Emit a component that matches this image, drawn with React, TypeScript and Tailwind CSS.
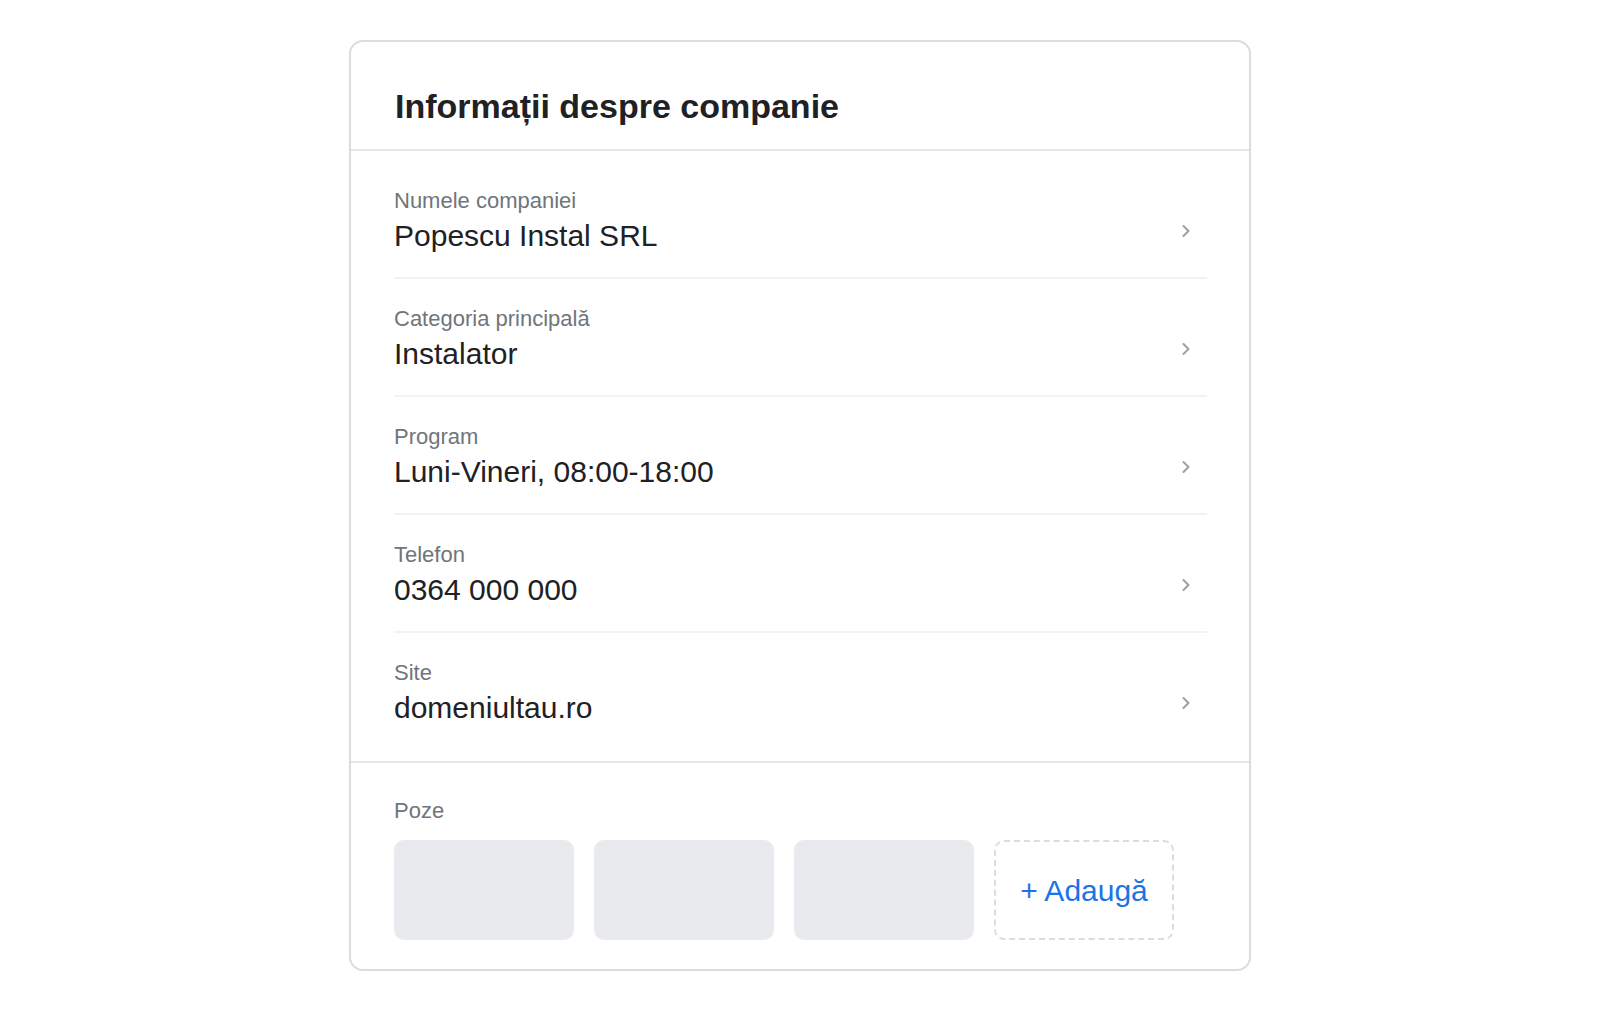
const FONT = { fontFamily: '"Liberation Sans", Arial, sans-serif' }

interface Field {
  label: string
  value: string
}

const FIELDS: Field[] = [
  { label: 'Numele companiei', value: 'Popescu Instal SRL' },
  { label: 'Categoria principală', value: 'Instalator' },
  { label: 'Program', value: 'Luni-Vineri, 08:00-18:00' },
  { label: 'Telefon', value: '0364 000 000' },
  { label: 'Site', value: 'domeniultau.ro' },
]

function Chevron() {
  return (
    <svg width="8" height="12" viewBox="0 0 8 12" fill="none" className="block">
      <path d="M1.5 1 L6.5 6 L1.5 11" stroke="#9aa0a6" strokeWidth="2" strokeLinecap="round" strokeLinejoin="round" />
    </svg>
  )
}

function FieldRow({ field, last }: { field: Field; last: boolean }) {
  return (
    <div className={`flex items-start justify-between pt-[26px] pb-[22px] ${last ? '' : 'border-b-2 border-[#f1f3f4]'}`}>
      <div>
        <div className="text-[22px] leading-[28px] text-[#70757a]">{field.label}</div>
        <div className="mt-[2px] text-[30px] leading-[38px] text-[#202124]">{field.value}</div>
      </div>
      <div className="mt-[38px] mr-[17px]">
        <Chevron />
      </div>
    </div>
  )
}

export default function App() {
  return (
    <div className="min-h-screen bg-white pt-[40px]" style={FONT}>
      <div className="mx-auto w-[902px] rounded-[14px] border-2 border-[#dadce0] bg-white">
        <div className="pl-[44px] pr-[42px] pt-[44px] pb-[23px] border-b-2 border-[#e6e7ea]">
          <h2 className="text-[34px] leading-[40px] font-bold text-[#202124]">Informații despre companie</h2>
        </div>

        <div className="pl-[43px] pr-[42px] pt-[10px] pb-[12px] border-b-2 border-[#e6e7ea]">
          {FIELDS.map((f, i) => (
            <FieldRow key={f.label} field={f} last={i === FIELDS.length - 1} />
          ))}
        </div>

        <div className="pl-[43px] pr-[42px] pt-[34px] pb-[29px]">
          <div className="text-[22px] leading-[28px] text-[#70757a] mb-[15px]">Poze</div>
          <div className="flex gap-[20px]">
            {[0, 1, 2].map((n) => (
              <div key={n} className="w-[180px] h-[100px] rounded-[10px] bg-[#e8eaed]" />
            ))}
            <button className="w-[180px] h-[100px] rounded-[10px] border-2 border-dashed border-[#dadce0] flex items-center justify-center text-[30px] text-[#1a73e8]">
              + Adaugă
            </button>
          </div>
        </div>
      </div>
    </div>
  )
}
